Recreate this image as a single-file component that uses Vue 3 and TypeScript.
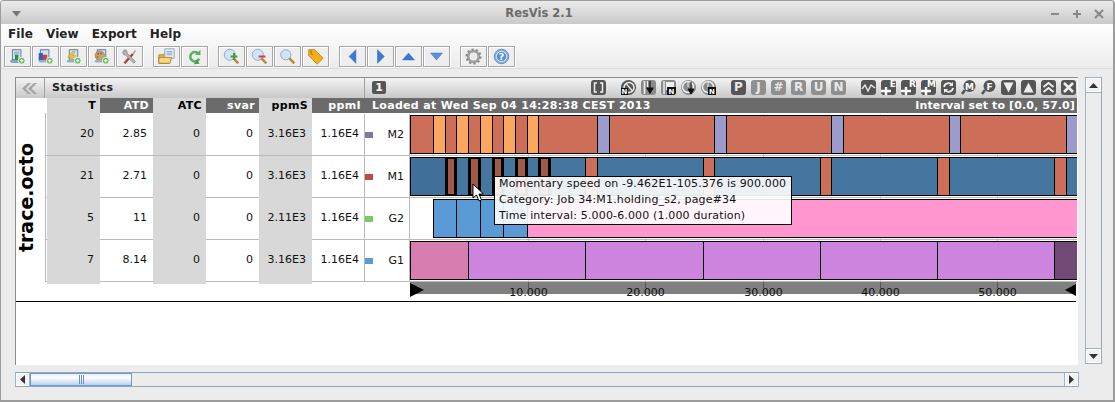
<script setup lang="ts">
type Seg = { a: number; b: number; c: string; hi?: boolean };
const S = '#cd6f58', O = '#fba75f', L = '#9a9acd', B = '#44769f', H = '#a25a48', Bl = '#5b9bd5', P = '#ff96d0', M = '#cc84de';

function m2(): Seg[] {
  const out: Seg[] = [{ a: 0, b: 2, c: S }];
  for (const n of [2, 4, 6, 8]) {
    out.push({ a: n, b: n + 1, c: O }, { a: n + 1, b: n + 2, c: S });
  }
  out.push({ a: 10, b: 11, c: O }, { a: 11, b: 16, c: S });
  for (const n of [16, 26, 36, 46]) {
    out.push({ a: n, b: n + 1, c: L }, { a: n + 1, b: n + 10, c: S });
  }
  out.push({ a: 56, b: 57, c: L });
  return out;
}
function m1(): Seg[] {
  const out: Seg[] = [{ a: 0, b: 3, c: '#40709a' }];
  for (const n of [3, 5, 7, 9]) {
    out.push({ a: n + 1, b: n + 2, c: B }, { a: n, b: n + 1, c: H, hi: true });
  }
  out.push({ a: 12, b: 15, c: B }, { a: 11, b: 12, c: H, hi: true });
  for (const n of [15, 25, 35, 45, 55]) {
    out.push({ a: n, b: n + 1, c: S }, { a: n + 1, b: n + 10, c: B });
  }
  return out;
}

const rows = [
  { label: 'M2', sw: '#7c78a8', v: ['20', '2.85', '0', '0', '3.16E3', '1.16E4'], segs: m2() },
  { label: 'M1', sw: '#c24848', v: ['21', '2.71', '0', '0', '3.16E3', '1.16E4'], segs: m1() },
  {
    label: 'G2', sw: '#7cc86c', v: ['5', '11', '0', '0', '2.11E3', '1.16E4'],
    segs: [
      { a: 2, b: 4, c: Bl }, { a: 4, b: 6, c: Bl }, { a: 6, b: 8, c: Bl }, { a: 8, b: 10, c: Bl }, { a: 10, b: 57, c: P },
    ] as Seg[],
  },
  {
    label: 'G1', sw: '#5b9bd5', v: ['7', '8.14', '0', '0', '3.16E3', '1.16E4'],
    segs: [
      { a: 0, b: 5, c: '#d87db0' }, { a: 5, b: 15, c: M }, { a: 15, b: 25, c: M }, { a: 25, b: 35, c: M },
      { a: 35, b: 45, c: M }, { a: 45, b: 55, c: M }, { a: 55, b: 57, c: '#704a75' },
    ] as Seg[],
  },
];
const heads = ['T', 'ATD', 'ATC', 'svar', 'ppmS', 'ppmI'];
const ticks = [10, 20, 30, 40, 50];
const SCALE = 11.72;
function segStyle(s: Seg) {
  const l = Math.floor(s.a * SCALE);
  const r = Math.floor(s.b * SCALE);
  return { left: l + 'px', width: r - l + 1 + 'px', background: s.c };
}
function tickLeft(t: number) {
  return Math.round(t * SCALE) + 1 + 'px';
}
const letters = ['P', 'J', '#', 'R', 'U', 'N'];
</script>

<template>
  <div class="win">
    <div class="title">
      <svg class="t-menu" width="9" height="6" viewBox="0 0 9 6"><path d="M0 0h9L4.500 5.500z" fill="#777" /></svg>
      <span class="t-text">ResVis 2.1</span>
      <div class="t-btns">
        <svg width="10" height="10" viewBox="0 0 10 10"><path d="M1 5h8" stroke="#888" stroke-width="2" /></svg>
        <svg width="10" height="10" viewBox="0 0 10 10"><path d="M1 5h8M5 1v8" stroke="#888" stroke-width="2" /></svg>
        <svg width="10" height="10" viewBox="0 0 10 10"><path d="M1 1l8 8M9 1l-8 8" stroke="#888" stroke-width="2" /></svg>
      </div>
    </div>

    <div class="top">
      <div class="menu"><span>File</span><span>View</span><span>Export</span><span>Help</span></div>
      <div class="tools">
        <div class="grp">
          <button class="tb"><svg viewBox="0 0 20 20"><path d="M4 2h10v12H4z" fill="#cfe0f0" stroke="#4a6f95" /><path d="M6 5h6M6 7h6" stroke="#7d9cbc" /><path d="M2 16c0-2 1-2 2-2h9v3H4c-1 0-2 0-2-1z" fill="#8fb0d0" stroke="#4a6f95" stroke-width=".7" /><rect x="7" y="8" width="4" height="6" fill="#3a8a3a" /><circle cx="15" cy="15" r="4" fill="#5cb85c" stroke="#fff" /><path d="M13 15h4M15 13v4" stroke="#fff" stroke-width="1.400" /></svg></button>
          <button class="tb"><svg viewBox="0 0 20 20"><path d="M4 2h10v12H4z" fill="#cfe0f0" stroke="#4a6f95" /><rect x="2" y="6" width="5" height="9" fill="#2d5fc0" /><rect x="7" y="8" width="5" height="7" fill="#d93a3a" /><path d="M2 16c0-2 1-2 2-2h9v3H4c-1 0-2 0-2-1z" fill="#8fb0d0" /><circle cx="15" cy="15" r="4" fill="#5cb85c" stroke="#fff" /><path d="M13 15h4M15 13v4" stroke="#fff" stroke-width="1.400" /></svg></button>
          <button class="tb"><svg viewBox="0 0 20 20"><path d="M5 2h10v12H5z" fill="#cfe0f0" stroke="#4a6f95" /><path d="M9 4L3 11h4l-2 5 8-7H9l3-5z" fill="#f2c230" stroke="#b58a10" stroke-width=".5" /><path d="M2 16c0-2 1-2 2-2h9v3H4c-1 0-2 0-2-1z" fill="#8fb0d0" /><circle cx="15" cy="15" r="4" fill="#5cb85c" stroke="#fff" /><path d="M13 15h4M15 13v4" stroke="#fff" stroke-width="1.400" /></svg></button>
          <button class="tb"><svg viewBox="0 0 20 20"><path d="M5 2h10v12H5z" fill="#cfe0f0" stroke="#4a6f95" /><circle cx="8" cy="9" r="5.500" fill="#d8a060" stroke="#8a5a20" stroke-width=".6" /><circle cx="6" cy="7" r="1.200" fill="#d33" /><circle cx="9.500" cy="6.500" r="1.200" fill="#38c" /><circle cx="5.500" cy="10.500" r="1.200" fill="#3a3" /><path d="M2 16c0-2 1-2 2-2h9v3H4c-1 0-2 0-2-1z" fill="#8fb0d0" /><circle cx="15" cy="15" r="4" fill="#5cb85c" stroke="#fff" /><path d="M13 15h4M15 13v4" stroke="#fff" stroke-width="1.400" /></svg></button>
          <button class="tb"><svg viewBox="0 0 20 20"><path d="M4 18L14 7" stroke="#c03030" stroke-width="2.600" /><path d="M14 7l3-4" stroke="#aaa" stroke-width="2" /><path d="M3 3c2-2 5 0 4 3l10 10-2 2L5 8C3 9 1 6 3 3z" fill="#b4b4b4" stroke="#777" stroke-width=".7" /></svg></button>
        </div>
        <div class="grp">
          <button class="tb"><svg viewBox="0 0 20 20"><path d="M1 8h6l1-2h5v12H1z" fill="#e9b84e" stroke="#a87a1c" /><path d="M8 1h11v11H8z" fill="#f0f4fa" stroke="#7b98bb" /><path d="M10 4h7M10 6h7M10 8h7" stroke="#6f93c0" /><path d="M1 11h15l-2 7H1z" fill="#f6d680" stroke="#a87a1c" /></svg></button>
          <button class="tb"><svg viewBox="0 0 20 20"><path d="M14.500 6.500a5.500 5.500 0 1 0 1 6" fill="none" stroke="#5cb060" stroke-width="3" /><path d="M10.500 8l6.500 .5V2z" fill="#5cb060" /><path d="M9 19l4-5.500 3 5z" fill="#4a9a50" /></svg></button>
        </div>
        <div class="grp">
          <button class="tb"><svg viewBox="0 0 20 20"><circle cx="8" cy="8" r="6.500" fill="#cfe4f7" stroke="#7fa4c8" /><path d="M12 12l6 6" stroke="#b98a3c" stroke-width="3" /><path d="M9 10h8M13 6v8" stroke="#4a9a3a" stroke-width="2.400" /></svg></button>
          <button class="tb"><svg viewBox="0 0 20 20"><circle cx="8" cy="8" r="6.500" fill="#cfe4f7" stroke="#7fa4c8" /><path d="M12 12l6 6" stroke="#b98a3c" stroke-width="3" /><path d="M9 10h8" stroke="#d04040" stroke-width="2.400" /></svg></button>
          <button class="tb"><svg viewBox="0 0 20 20"><circle cx="8" cy="8" r="6" fill="#cfe4f7" stroke="#7fa4c8" /><path d="M12 12l6 6" stroke="#b98a3c" stroke-width="3" /></svg></button>
          <button class="tb"><svg viewBox="0 0 20 20"><path d="M2 2h7l10 10-7 7L2 9z" fill="#f5ae1c" stroke="#c7820c" /><path d="M5 3c-1 2 0 5 2 5" fill="none" stroke="#7a5a10" /></svg></button>
        </div>
        <div class="grp">
          <button class="tb"><svg viewBox="0 0 20 20"><path d="M14 2v16L6 10z" fill="#3b78d8" stroke="#3067c0" stroke-width=".6" /></svg></button>
          <button class="tb"><svg viewBox="0 0 20 20"><path d="M6.500 2v16l8-8z" fill="#3b78d8" stroke="#3067c0" stroke-width=".6" /></svg></button>
          <button class="tb"><svg viewBox="0 0 20 20"><path d="M3 14h14L10 6z" fill="#3b78d8" stroke="#3067c0" stroke-width=".6" /></svg></button>
          <button class="tb"><svg viewBox="0 0 20 20"><path d="M3 6h14l-7 8z" fill="#5c93de" stroke="#3067c0" stroke-width=".6" /></svg></button>
        </div>
        <div class="grp">
          <button class="tb"><svg viewBox="0 0 20 20"><circle cx="10" cy="10" r="6.200" fill="none" stroke="#a0a0a0" stroke-width="3.200" /><circle cx="10" cy="10" r="8.200" fill="none" stroke="#8c8c8c" stroke-width="2.600" stroke-dasharray="2.600 2.550" /><circle cx="10" cy="10" r="3" fill="#e8e8e8" /></svg></button>
          <button class="tb"><svg viewBox="0 0 20 20"><circle cx="10" cy="10" r="8.500" fill="#8fb4e4" stroke="#4f7fc0" /><circle cx="10" cy="10" r="6" fill="#5e8fd2" stroke="#e6eefa" /><text x="10" y="14" text-anchor="middle" class="help">?</text></svg></button>
        </div>
      </div>
    </div>

    <div class="content">
      <div class="upper">
        <div class="pane">
          <div class="hdr">
            <div class="h-col">
              <svg width="16" height="11" viewBox="0 0 16 11"><path d="M7 0L1 5.500 7 11h3L4.500 5.500 10 0zM13 0L7 5.500 13 11h3L10.500 5.500 16 0z" fill="#a4a4a4" /></svg>
            </div>
            <div class="h-stat">Statistics</div>
            <div class="h-info">
              <span class="one">1</span>
              <div class="ic-row">
                <span class="ic dk"><svg viewBox="0 0 15 15"><path d="M6 3H3.500v9H6M9 3h2.500v9H9" fill="none" stroke="#eee" stroke-width="1.500" /></svg></span>
                <span class="gap-a"></span>
                <span class="ic dk circ"><svg viewBox="0 0 15 15"><circle cx="8" cy="7.500" r="5" fill="none" stroke="#eee" stroke-width="1.500" /><path d="M5 3.500l6.500 7.500" stroke="#eee" stroke-width="1.200" /><rect x="0" y="8" width="7" height="7" fill="#111" /><text x="3.500" y="14" text-anchor="middle" class="mini">N</text></svg></span>
                <span class="ic mid"><svg viewBox="0 0 15 15"><path d="M3.500 1v13" stroke="#eee" stroke-width="1.600" /><path d="M9 1v7M6 8h6l-3 5z" fill="#111" stroke="#111" stroke-width="1.200" /><path d="M6.500 1v6" stroke="#eee" /></svg></span>
                <span class="ic mid"><svg viewBox="0 0 15 15"><path d="M3 1v13" stroke="#eee" stroke-width="1.500" /><rect x="5" y="2" width="8" height="8" fill="#eee" /><rect x="6" y="7" width="9" height="8" fill="#111" /><text x="10.500" y="14" text-anchor="middle" class="mini">N</text></svg></span>
                <span class="ic mid circ"><svg viewBox="0 0 15 15"><circle cx="7" cy="7" r="5.500" fill="none" stroke="#eee" stroke-width="1.500" /><path d="M7 2v5" stroke="#eee" /><path d="M10 2v7M7 9h6l-3 5z" fill="#111" stroke="#111" /></svg></span>
                <span class="ic mid circ"><svg viewBox="0 0 15 15"><circle cx="7" cy="7" r="5.500" fill="none" stroke="#eee" stroke-width="1.500" /><path d="M7 2v5l4 3" fill="none" stroke="#eee" /><rect x="7" y="7" width="8" height="8" fill="#111" /><text x="11" y="14" text-anchor="middle" class="mini">N</text></svg></span>
                <span class="gap-b"></span>
                <span v-for="(l, i) in letters" :key="l" class="ic let" :class="i === 0 ? 'dk' : 'lt'">{{ l }}</span>
                <span class="gap-b"></span>
                <span class="ic dk"><svg viewBox="0 0 15 15"><path d="M1 9l3-4 3 6 3-6 4 3" fill="none" stroke="#eee" stroke-width="1.300" /></svg></span>
                <span class="ic dk"><svg viewBox="0 0 15 15"><path d="M0 11h10M5 7v8" stroke="#fff" stroke-width="2.400" /></svg><em>E</em></span>
                <span class="ic dk"><svg viewBox="0 0 15 15"><path d="M0 11h10M5 7v8" stroke="#fff" stroke-width="2.400" /></svg><em>R</em></span>
                <span class="ic dk"><svg viewBox="0 0 15 15"><path d="M0 11h10M5 7v8" stroke="#fff" stroke-width="2.400" /></svg><em>M</em></span>
                <span class="ic dk"><svg viewBox="0 0 15 15"><path d="M3 7a4.500 4.500 0 0 1 8-2M12 8a4.500 4.500 0 0 1-8 2" fill="none" stroke="#eee" stroke-width="1.800" /><path d="M12 2v4H8zM3 13V9h4z" fill="#eee" /></svg></span>
                <span class="ic none"><svg viewBox="0 0 15 15"><circle cx="8.500" cy="6" r="6" fill="#555" /><path d="M4 10l-3 4" stroke="#555" stroke-width="2.600" /><text x="8.500" y="9.500" text-anchor="middle" class="mag">M</text></svg></span>
                <span class="ic none"><svg viewBox="0 0 15 15"><circle cx="8.500" cy="6" r="6" fill="#555" /><path d="M4 10l-3 4" stroke="#555" stroke-width="2.600" /><text x="8.500" y="9.500" text-anchor="middle" class="mag">F</text></svg></span>
                <span class="ic dk"><svg viewBox="0 0 15 15"><path d="M2.500 2.500h10l-5 10z" fill="#eee" /></svg></span>
                <span class="ic dk"><svg viewBox="0 0 15 15"><path d="M2.500 12.500h10l-5-10z" fill="#eee" /></svg></span>
                <span class="ic dk"><svg viewBox="0 0 15 15"><path d="M2.500 7l5-4 5 4M2.500 12l5-4 5 4" fill="none" stroke="#eee" stroke-width="2" /></svg></span>
                <span class="ic dk"><svg viewBox="0 0 15 15"><path d="M3 3l9 9M12 3l-9 9" stroke="#eee" stroke-width="2.600" /></svg></span>
              </div>
            </div>
          </div>

          <div class="sub">
            <div class="s-blank"></div>
            <div v-for="(h, i) in heads" :key="h" class="s-h" :class="i % 2 ? 'dark' : 'light'">{{ h }}</div>
            <div class="s-msg">
              <span class="m-left">Loaded at Wed Sep 04 14:28:38 CEST 2013</span>
              <span class="m-right">Interval set to [0.0, 57.0]</span>
            </div>
          </div>

          <div class="body">
            <div class="trace"><span>trace.octo</span></div>
            <div class="grid-wrap">
              <div v-for="(r, ri) in rows" :key="r.label" class="row" :class="{ last: ri === 3 }">
                <div class="cells">
                  <div v-for="(v, i) in r.v" :key="i" class="cell" :class="{ alt: i % 2 === 0 }">{{ v }}</div>
                </div>
                <div class="lab">
                  <i :style="{ background: r.sw }"></i>
                  <b>{{ r.label }}</b>
                </div>
                <div class="lane">
                  <s v-for="t in ticks" :key="t" class="gridtick" :style="{ left: tickLeft(t) }"></s>
                  <div
                    v-for="(s, i) in r.segs"
                    :key="i"
                    class="seg"
                    :class="{ hi: s.hi }"
                    :style="segStyle(s)"
                  ></div>
                </div>
              </div>
              <div class="axis-row">
                <div class="axis">
                  <div class="band"></div>
                  <template v-for="t in ticks" :key="t">
                    <s class="axtick" :style="{ left: tickLeft(t) }"></s>
                    <span class="axtxt" :style="{ left: tickLeft(t) }">{{ t }}.000</span>
                  </template>
                  <svg class="tri-l" width="14" height="14" viewBox="0 0 14 14"><path d="M0 0l14 7-14 7z" /></svg>
                  <svg class="tri-r" width="11" height="12" viewBox="0 0 11 12"><path d="M11 0L0 6l11 6z" /></svg>
                </div>
              </div>
            </div>
          </div>
          <div class="rule"></div>

          <div class="tip">
            <div>Momentary speed on -9.462E1-105.376 is 900.000</div>
            <div>Category: Job 34:M1.holding_s2, page#34</div>
            <div>Time interval: 5.000-6.000 (1.000 duration)</div>
          </div>
          <svg class="cursor" width="13" height="19" viewBox="0 0 13 19"><path d="M1 1v14l3.500-3 2.500 6 2.500-1-2.500-6h4.500z" fill="#fff" stroke="#000" /></svg>
        </div>

        <div class="vbar">
          <div class="sb-btn"><svg width="9" height="5" viewBox="0 0 9 5"><path d="M0 5h9L4.500 0z" fill="#333" /></svg></div>
          <div class="sb-fill"></div>
          <div class="sb-btn"><svg width="9" height="5" viewBox="0 0 9 5"><path d="M0 0h9L4.500 5z" fill="#333" /></svg></div>
        </div>
      </div>

      <div class="hbar">
        <div class="sb-btn h"><svg width="5" height="9" viewBox="0 0 5 9"><path d="M5 0v9L0 4.500z" fill="#333" /></svg></div>
        <div class="thumb"><i></i><i></i><i></i></div>
        <div class="sb-fill h"></div>
        <div class="sb-btn h"><svg width="5" height="9" viewBox="0 0 5 9"><path d="M0 0v9l5-4.500z" fill="#333" /></svg></div>
      </div>
    </div>
  </div>
</template>

<style scoped>
.win {
  width: 1115px;
  height: 402px;
  box-sizing: border-box;
  border: 1px solid #9c9c9c;
  border-bottom-width: 2px;
  border-right-width: 2px;
  border-radius: 4px 4px 0 0;
  background: #ececec;
  display: flex;
  flex-direction: column;
  overflow: hidden;
  font-family: "DejaVu Sans", sans-serif;
  color: #000;
}
.title {
  height: 23px;
  flex: none;
  background: linear-gradient(#ebebeb, #c9c9c9);
  display: flex;
  align-items: center;
  justify-content: center;
  position: relative;
}
.t-menu { position: absolute; left: 11px; top: 10px; }
.t-text { font-size: 11.500px; font-weight: bold; color: #6b6b6b; margin-left: -36px; }
.t-btns { position: absolute; right: 9px; top: 8px; display: flex; gap: 12px; }

.top {
  height: 45px;
  flex: none;
  box-sizing: border-box;
  background: linear-gradient(#fff, #ebebeb);
  padding-top: 4px;
  border-bottom: 1px solid #dcdcdc;
}
.menu {
  display: flex;
  gap: 13px;
  padding-left: 7px;
  height: 17px;
  font-size: 12px;
  font-weight: bold;
  line-height: 13px;
  letter-spacing: .1px;
  color: #222;
  margin-bottom: 1px;
}
.tools { display: flex; gap: 10px; padding-left: 3px; }
.grp { display: flex; gap: 1px; }
.tb {
  width: 27px;
  height: 21px;
  padding: 0;
  box-sizing: border-box;
  border: 1px solid #a6a6a6;
  background: #eeeeee;
  box-shadow: 1px 1px 0 #fff, inset 1px 1px 0 #fff;
  display: flex;
  align-items: center;
  justify-content: center;
}
.tb svg { width: 17px; height: 17px; display: block; }
.help { font: bold 11px "DejaVu Sans", sans-serif; fill: #fff; }

.content {
  flex: 1;
  display: flex;
  flex-direction: column;
  padding: 8px 0 0 14px;
}
.upper { display: flex; gap: 7px; height: 288px; }
.pane {
  width: 1063px;
  height: 288px;
  box-sizing: border-box;
  background: #fff;
  border-left: 1px solid #8c8c8c;
  border-top: 1px solid #8c8c8c;
  position: relative;
  overflow: hidden;
}
.hdr { display: flex; height: 20px; width: 1061px; }
.hdr > div {
  box-sizing: border-box;
  background: linear-gradient(#f4f4f4, #c8c8c8);
  border-right: 1px solid #a0a0a0;
}
.h-col { width: 29px; display: flex; align-items: center; justify-content: center; padding-right: 3px; }
.h-stat { width: 320px; padding: 3px 0 0 7px; font-size: 11px; font-weight: bold; letter-spacing: .3px; line-height: 14px; color: #222; }
.h-info { flex: 1; position: relative; border-right: 0 !important; }
.one {
  position: absolute; left: 7px; top: 3px; width: 14px; height: 13px;
  border-radius: 2px; background: #555; color: #fff;
  font-size: 11px; font-weight: bold; line-height: 13px; text-align: center;
}
.ic-row { position: absolute; left: 226px; top: 2px; display: flex; gap: 5px; align-items: center; }
.gap-a { width: 10px; margin-left: -5px; }
.gap-b { width: 10px; margin-left: -5px; }
.ic {
  width: 15px; height: 15px; flex: none; display: block;
  border-radius: 3px; position: relative; overflow: hidden;
}
.ic svg { display: block; width: 15px; height: 15px; }
.ic.dk { background: #555; }
.ic.mid { background: #8a8a8a; }
.ic.circ { border-radius: 50%; overflow: visible; }
.ic.lt { background: #8f8f8f; }
.ic.none { background: transparent; overflow: visible; }
.ic.let { color: #e8e8e8; font-size: 12px; font-weight: bold; line-height: 15px; text-align: center; }
.ic em { position: absolute; right: 0; top: 0; font: bold 9px/9px "DejaVu Sans", sans-serif; color: #fff; }
.mini { font: bold 7px "DejaVu Sans", sans-serif; fill: #fff; }
.mag { font: bold 9px "DejaVu Sans", sans-serif; fill: #fff; }

.sub { display: flex; height: 15px; width: 1061px; font-size: 11px; font-weight: bold; line-height: 15px; letter-spacing: .35px; }
.s-blank { width: 31px; }
.s-h { width: 53px; box-sizing: border-box; text-align: right; padding-right: 4px; }
.s-h.light { background: #d8d8d8; }
.s-h.dark { background: #6b6b6b; color: #fff; }
.s-msg {
  flex: 1; background: #6b6b6b; color: #fff; display: flex; justify-content: space-between;
  padding: 0 2px 0 7px;
}
.m-left { letter-spacing: .31px; }
.m-right { letter-spacing: .11px; }

.body { display: flex; }
.trace { width: 29px; height: 169px; box-sizing: border-box; padding-right: 9px; display: flex; align-items: center; justify-content: center; }
.trace span {
  writing-mode: vertical-rl;
  transform: rotate(180deg);
  font-size: 19px;
  font-weight: bold;
  line-height: 20px;
}
.grid-wrap { border-left: 1px solid #bbb; height: 168px; padding-top: 1px; }
.row { display: flex; height: 42px; width: 1031px; box-sizing: border-box; border-bottom: 1px solid #bbb; }
.cells { display: flex; padding-left: 1px; }
.cell {
  width: 53px; height: 41px; box-sizing: border-box; text-align: right; padding-right: 6px;
  font-size: 11px; line-height: 39px; color: #111;
}
.cell.alt { background: #d8d8d8; height: 42px; }
.row:first-child .cell { height: 42px; margin-top: -1px; line-height: 41px; }
.row:first-child .cell:not(.alt) { background: transparent; }
.row.last .cell.alt { box-shadow: 0 2px 0 #d8d8d8; }
.lab {
  width: 46px; height: 41px; flex: none; box-sizing: border-box; border-left: 1px solid #bbb; border-right: 1px solid #bbb;
  display: flex; align-items: center; justify-content: space-between; margin-left: -1px;
  padding-right: 5px; font-size: 11px; line-height: 39px;
}
.lab i { width: 8px; height: 6px; margin-top: 1px; }
.lab b { font-weight: normal; color: #111; margin-top: -1px; }
.lane { flex: 1; position: relative; height: 41px; overflow: hidden; min-width: 0; }
.gridtick { position: absolute; top: 0; bottom: 0; width: 1px; background: #cfcfcf; }
.seg {
  position: absolute; top: 1px; height: 39px; box-sizing: border-box; border: 1px solid #000;
}
.seg.hi { border-width: 3px; border-top-width: 2px; border-bottom-width: 2px; z-index: 1; }

.axis-row { width: 1031px; padding-left: 363px; box-sizing: border-box; height: 0; }
.axis { position: relative; width: 666px; height: 20px; overflow: hidden; margin-left: 1px; }
.band { height: 12px; background: #808080; }
.axtick { position: absolute; top: 0; height: 6px; width: 1px; background: #555; }
.axtxt { position: absolute; top: 4px; transform: translateX(-50%); font-size: 11px; line-height: 13px; color: #111; padding-left: 1px; }
.tri-l { position: absolute; left: 0; top: 1px; }
.tri-r { position: absolute; right: 0; top: 2px; }

.rule { position: absolute; left: 0; top: 223px; width: 1060px; height: 1px; background: #000; }

.tip {
  position: absolute; left: 478px; top: 98px; width: 298px; height: 49px; box-sizing: border-box;
  border: 1px solid #000; background: rgba(255, 255, 255, .9);
  padding: 0 0 0 4px; font-size: 11px; line-height: 16px; color: #111; z-index: 3; letter-spacing: .15px;
}
.tip > div:first-child { margin-top: -1px; }
.cursor { position: absolute; left: 456px; top: 105px; z-index: 4; }

.vbar { width: 15px; height: 287px; display: flex; flex-direction: column; border-left: 1px solid #9fb3c8; border-right: 1px solid #9aa7b4; box-sizing: content-box; }
.sb-btn { height: 16px; flex: none; display: flex; align-items: center; justify-content: center; background: #f2f2f2; box-shadow: inset 0 0 0 1px #fff; border-top: 1px solid #9fb3c8; border-bottom: 1px solid #9fb3c8; box-sizing: border-box; }
.sb-fill { flex: 1; background: #ececec; }
.hbar {
  margin-top: 7px; width: 1064px; height: 15px; display: flex;
  border-top: 1px solid #8fa6bd; border-bottom: 1px solid #8fa6bd; box-sizing: border-box;
}
.sb-btn.h { width: 15px; height: auto; border: 1px solid #9fb3c8; border-top: 0; border-bottom: 0; }
.sb-fill.h { flex: 1; }
.thumb {
  width: 102px; box-sizing: border-box; border: 1px solid #7197d0;
  background: linear-gradient(#e6eef9 0, #fff 30%, #bcd2ee 100%);
  display: flex; align-items: center; justify-content: center; gap: 1px;
}
.thumb i { width: 1px; height: 9px; background: #6b8fcc; }
</style>
